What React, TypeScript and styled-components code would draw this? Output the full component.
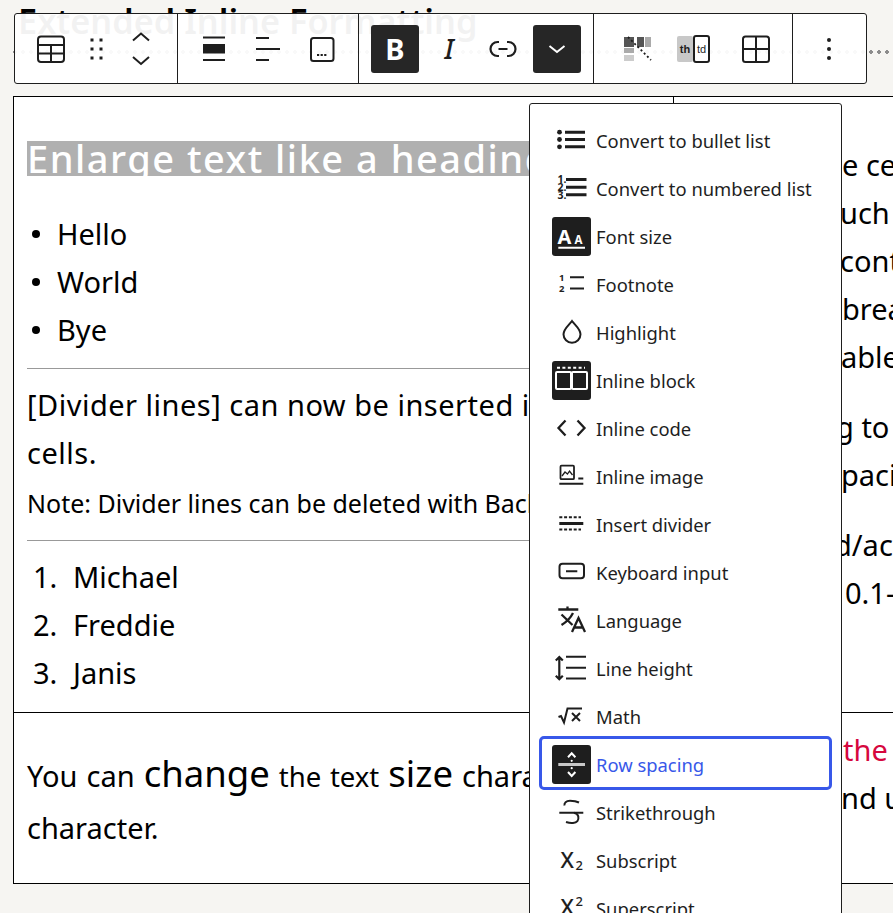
import React from "react";
import styled, { createGlobalStyle } from "styled-components";

const INK = "#1e1e1e";
const BODY_FONT = '"Noto Sans", "Noto Sans CJK JP", sans-serif';
const UI_FONT = '"Noto Sans", "Open Sans", sans-serif';

const GlobalStyle = createGlobalStyle`
  html, body {
    margin: 0;
    padding: 0;
    background: #f6f5f2;
  }
`;

const Page = styled.div`
  position: relative;
  width: 893px;
  height: 913px;
  overflow: hidden;
  padding-left: 13px;
  box-sizing: border-box;
  font-family: ${BODY_FONT};
  color: #000;
`;

const Title = styled.h2`
  margin: 0 0 0 5px;
  height: 50px;
  font-size: 34.3px;
  line-height: 42px;
  font-weight: 600;
  white-space: nowrap;
  color: #000;
`;

const DotRule = styled.div`
  width: 880px;
  height: 4px;
  background-image: radial-gradient(circle at 2px 2px, #8c8c8c 1.7px, transparent 2px);
  background-size: 8px 4px;
`;

const Table = styled.div`
  display: grid;
  grid-template-columns: 660px 300px;
  grid-template-rows: 616px 170px;
  width: 961px;
  margin-top: 42px;
  border: 1px solid #000;
  background: #fff;
`;

const Cell = styled.div<{ $bottom?: boolean }>`
  box-sizing: border-box;
  overflow: hidden;
  border-right: 1px solid #000;
  border-bottom: ${({ $bottom }) => ($bottom ? "none" : "1px solid #000")};
  padding: 44px 13px 0;
  font-size: 29px;
  line-height: 48px;
  white-space: nowrap;
`;

const LowerCell = styled(Cell)`
  padding-top: 37px;
  line-height: 52px;
  word-spacing: 1.5px;
`;

const SideCell = styled(Cell)`
  padding-left: 169px;
`;

const LowerSideCell = styled(SideCell)`
  padding-top: 13px;
`;

const Highlight = styled.span`
  display: inline-block;
  width: 620px;
  height: 35px;
  line-height: 35px;
  font-size: 38px;
  letter-spacing: 1.5px;
  font-weight: 500;
  background: #b0b0b0;
  color: #fff;
  vertical-align: top;
`;

const Lead = styled.div`
  height: 35px;
  margin-bottom: 34px;
`;

const List = styled.ul`
  list-style: none;
  margin: 0;
  padding: 0;
`;

const Bullet = styled.li`
  display: flex;
  align-items: center;
  padding-left: 30px;
  position: relative;
  &::before {
    content: "";
    position: absolute;
    left: 5px;
    top: 20px;
    width: 8px;
    height: 8px;
    border-radius: 50%;
    background: #000;
  }
`;

const Numbered = styled.li`
  display: flex;
`;

const Num = styled.span`
  width: 46px;
  padding-left: 6px;
  box-sizing: border-box;
`;

const Rule = styled.hr<{ $gap: number }>`
  border: none;
  border-top: 1px solid #999;
  margin: ${({ $gap }) => $gap}px 0 12px;
`;

const DividerText = styled.div`
  letter-spacing: 0.5px;
`;

const Small = styled.div`
  margin-top: 2px;
  font-size: 25px;
`;

const Big = styled.span`
  font-size: 36.5px;
  line-height: 1;
`;

const Tiny = styled.span`
  font-size: 27.5px;
  line-height: 1;
`;

const Line = styled.div<{ $shift?: number; $red?: boolean }>`
  margin-left: ${({ $shift }) => $shift ?? 0}px;
  color: ${({ $red }) => ($red ? "#d6073e" : "#000")};
`;

const Para = styled.div`
  margin-bottom: 22px;
`;

/* toolbar */
const Toolbar = styled.div`
  position: absolute;
  left: 14px;
  top: 13px;
  display: flex;
  height: 71px;
  box-sizing: border-box;
  border: 1px solid ${INK};
  border-radius: 3px;
  background: rgba(255, 255, 255, 0.95);
`;

const Group = styled.div<{ $width: number; $last?: boolean }>`
  display: flex;
  align-items: center;
  width: ${({ $width }) => $width}px;
  box-sizing: border-box;
  padding-left: 12px;
  gap: 6px;
  border-right: ${({ $last }) => ($last ? "none" : `1px solid ${INK}`)};
`;

const ToolButton = styled.button<{ $active?: boolean; $width?: number }>`
  display: flex;
  align-items: center;
  justify-content: center;
  flex: none;
  width: ${({ $width }) => $width ?? 48}px;
  height: 48px;
  padding: 0;
  border: none;
  border-radius: 3px;
  background: ${({ $active }) => ($active ? "#262626" : "transparent")};
  color: ${({ $active }) => ($active ? "#fff" : INK)};
  font-family: ${UI_FONT};
`;

const BoldMark = styled.span`
  font-size: 29px;
  font-weight: 700;
  line-height: 1;
`;

const ItalicMark = styled.span`
  font-size: 27px;
  font-weight: 500;
  font-style: italic;
  line-height: 1;
`;

/* dropdown */
const Menu = styled.div`
  position: absolute;
  left: 529px;
  top: 103px;
  width: 313px;
  height: 860px;
  box-sizing: border-box;
  padding-top: 12px;
  border: 1px solid ${INK};
  border-radius: 3px;
  background: #fff;
  font-family: ${UI_FONT};
`;

const Item = styled.div<{ $focused?: boolean }>`
  position: relative;
  display: flex;
  align-items: center;
  gap: 5px;
  height: 48px;
  padding-left: 22px;
  font-size: 18.4px;
  white-space: nowrap;
  color: ${({ $focused }) => ($focused ? "#3858e9" : INK)};
  &::after {
    content: "";
    display: ${({ $focused }) => ($focused ? "block" : "none")};
    position: absolute;
    left: 9px;
    right: 9px;
    top: -4px;
    bottom: -2px;
    border: 3px solid #3858e9;
    border-radius: 5px;
  }
`;

const Glyph = styled.svg<{ $dark?: boolean }>`
  flex: none;
  width: 39px;
  height: 39px;
  border-radius: 3px;
  background: ${({ $dark }) => ($dark ? "#1e1e1e" : "transparent")};
  color: ${({ $dark }) => ($dark ? "#fff" : INK)};
`;

const ToolGlyph = styled.svg<{ $light?: boolean }>`
  width: 32px;
  height: 32px;
  overflow: visible;
  color: ${({ $light }) => ($light ? "#fff" : INK)};
`;

const S = { fill: "none", stroke: "currentColor", strokeWidth: 2 } as const;
const TXT = { fontFamily: "Noto Sans, sans-serif", fill: "currentColor" } as const;
const CELL_TXT = { fontFamily: "Liberation Sans, sans-serif", fill: "currentColor" } as const;

const menuItems: { label: string; dark?: boolean; focused?: boolean; icon: React.ReactNode }[] = [
  {
    label: "Convert to bullet list",
    icon: (
      <>
        <circle cx="7.5" cy="11.2" r="2.4" fill="currentColor" />
        <circle cx="7.5" cy="18.5" r="2.4" fill="currentColor" />
        <circle cx="7.5" cy="25.8" r="2.4" fill="currentColor" />
        <path d="M13 11.2h20M13 18.5h20M13 25.8h20" {...S} strokeWidth={3} />
      </>
    ),
  },
  {
    label: "Convert to numbered list",
    icon: (
      <>
        <text x="5.5" y="14" fontSize="10.5" fontWeight="700" {...TXT}>1.</text>
        <text x="5.5" y="22" fontSize="10.5" fontWeight="700" {...TXT}>2.</text>
        <text x="5.5" y="30" fontSize="10.5" fontWeight="700" {...TXT}>3.</text>
        <path d="M14 10.5h20.5M14 18.2h20.5M14 25.8h20.5" {...S} strokeWidth={3} />
      </>
    ),
  },
  {
    label: "Font size",
    dark: true,
    icon: (
      <>
        <text x="5.5" y="27" fontSize="20" fontWeight="700" {...TXT}>A</text>
        <text x="22.6" y="27" fontSize="11.5" fontWeight="700" {...TXT}>A</text>
        <path d="M6.3 30.8h26.7" {...S} />
      </>
    ),
  },
  {
    label: "Footnote",
    icon: (
      <>
        <text x="7" y="15.5" fontSize="9.5" fontWeight="700" {...TXT}>1</text>
        <text x="7" y="27" fontSize="9.5" fontWeight="700" {...TXT}>2</text>
        <path d="M18 12.2h14M18 23.5h14" {...S} />
      </>
    ),
  },
  {
    label: "Highlight",
    icon: <path d="M20 8C17 12 11.5 16 11.5 21.2a8.5 8.5 0 0 0 17 0C28.5 16 23 12 20 8z" {...S} />,
  },
  {
    label: "Inline block",
    dark: true,
    icon: (
      <>
        <path d="M5 6.7h28" {...S} strokeDasharray="3 2.4" />
        <rect x="4" y="11" width="15" height="17" rx="1" {...S} />
        <rect x="20" y="11" width="15" height="17" rx="1" {...S} />
      </>
    ),
  },
  {
    label: "Inline code",
    icon: <path d="M13.5 11.5L6.5 19l7 7.5M25.5 11.5l7 7.5-7 7.5" {...S} strokeWidth={2.3} />,
  },
  {
    label: "Inline image",
    icon: (
      <>
        <rect x="8.5" y="8.7" width="13.5" height="13.5" rx="1" {...S} strokeWidth={1.8} />
        <path d="M10 19l3-4 2.5 2 2-3 3 4" {...S} strokeWidth={1.3} />
        <path d="M26.3 21.5h5M7.3 26.8h24" {...S} />
      </>
    ),
  },
  {
    label: "Insert divider",
    icon: (
      <>
        <path d="M7.3 12.2H29M7.3 24.5H29" {...S} strokeDasharray="3 1.8" />
        <path d="M7.3 18.5h24" {...S} strokeWidth={3} />
      </>
    ),
  },
  {
    label: "Keyboard input",
    icon: (
      <>
        <rect x="7.5" y="10.7" width="24.5" height="14.5" rx="3" {...S} />
        <path d="M14 18.2h11.3" {...S} />
      </>
    ),
  },
  {
    label: "Language",
    icon: (
      <path
        d="M6.3 8.5h20M15.5 5.5v3M9.5 13.5l11 10.5M21 12c-2.5 5-6.5 9-11.5 12M20 31l6.5-14 6.5 14M22.2 26.5h8.6"
        {...S}
        strokeWidth={2.3}
      />
    ),
  },
  {
    label: "Line height",
    icon: (
      <>
        <path d="M7.3 9v20M3.8 11.5l3.5-3.5 3.5 3.5M3.8 26.8l3.5 3.5 3.5-3.5" {...S} strokeWidth={2.2} />
        <path d="M14 7.8h20M14 18.8h20M14 29.5h20" {...S} />
      </>
    ),
  },
  {
    label: "Math",
    icon: <path d="M6.5 20l2.5-1 3 6.5 3.5-14H30M20 16l8 8M28 16l-8 8" {...S} />,
  },
  {
    label: "Row spacing",
    dark: true,
    focused: true,
    icon: (
      <>
        <path d="M16 12.3l3.7-4 3.7 4M16 27l3.7 4 3.7-4" {...S} />
        <circle cx="19.7" cy="15.8" r="1.1" fill="currentColor" />
        <circle cx="19.7" cy="23.2" r="1.1" fill="currentColor" />
        <path d="M6.3 19.5h26.7" fill="none" stroke="#c8c8c8" strokeWidth={3} />
      </>
    ),
  },
  {
    label: "Strikethrough",
    icon: (
      <>
        <path d="M7.3 19.8h24" {...S} />
        <path d="M27 9.5C24 8 21 7.8 18 7.8c-4 0-6 2-5.5 4.7M14 29c3 1 5 1.2 7 1 4-.3 6-2.5 5.3-6.5-.4-2-2.2-3.2-4.3-3.7" {...S} />
      </>
    ),
  },
  {
    label: "Subscript",
    icon: (
      <>
        <text x="8.5" y="26.5" fontSize="22" fontWeight="500" {...TXT}>X</text>
        <text x="23.5" y="29" fontSize="13" fontWeight="500" {...TXT}>2</text>
      </>
    ),
  },
  {
    label: "Superscript",
    icon: (
      <>
        <text x="8.5" y="25.8" fontSize="22" fontWeight="500" {...TXT}>X</text>
        <text x="23.5" y="16.5" fontSize="13" fontWeight="500" {...TXT}>2</text>
      </>
    ),
  },
];

const sideLines = [
  [
    { text: "e ce", shift: -1 },
    { text: "uch", shift: -3 },
    { text: "cont", shift: -3 },
    { text: "brea", shift: -1 },
    { text: "able", shift: -2 },
  ],
  [{ text: "g to", shift: -7 }, { text: "paci", shift: -2 }],
  [{ text: "d/ac", shift: -9 }, { text: "0.1-", shift: 2 }],
];

const App: React.FC = () => {
  return (
    <Page>
      <GlobalStyle />
      <Title>Extended Inline Formatting</Title>
      <DotRule />

      <Table>
        <Cell>
          <Lead>
            <Highlight>Enlarge text like a heading</Highlight>
          </Lead>
          <List>
            <Bullet>Hello</Bullet>
            <Bullet>World</Bullet>
            <Bullet>Bye</Bullet>
          </List>
          <Rule $gap={14} />
          <DividerText>
            [Divider lines] can now be inserted into
            <br />
            cells.
          </DividerText>
          <Small>Note: Divider lines can be deleted with Backspace.</Small>
          <Rule $gap={13} />
          <List as="ol">
            <Numbered><Num>1.</Num>Michael</Numbered>
            <Numbered><Num>2.</Num>Freddie</Numbered>
            <Numbered><Num>3.</Num>Janis</Numbered>
          </List>
        </Cell>
        <SideCell>
          {sideLines.map((para, i) => (
            <Para key={i}>
              {para.map((line) => (
                <Line key={line.text} $shift={line.shift}>{line.text}</Line>
              ))}
            </Para>
          ))}
        </SideCell>
        <LowerCell $bottom>
          You can <Big>change</Big> <Tiny>the text</Tiny> <Big>size</Big> character by
          <br />
          character.
        </LowerCell>
        <LowerSideCell $bottom>
          <Line $red>the</Line>
          <Line $shift={-2}>nd u</Line>
        </LowerSideCell>
      </Table>

      <Toolbar>
        <Group $width={163}>
          <ToolButton>
            <ToolGlyph viewBox="0 0 32 32">
              <rect x="3" y="3.5" width="26" height="25.5" rx="3" {...S} />
              <path d="M3 12h26M3 20.5h26M16 12v17" {...S} />
            </ToolGlyph>
          </ToolButton>
          <ToolButton $width={30}>
            <ToolGlyph viewBox="0 0 32 32">
              <path
                d="M10.5 5.5h3v3h-3zM19.5 5.5h3v3h-3zM10.5 14.5h3v3h-3zM19.5 14.5h3v3h-3zM10.5 23.5h3v3h-3zM19.5 23.5h3v3h-3z"
                fill="currentColor"
              />
            </ToolGlyph>
          </ToolButton>
          <ToolButton>
            <ToolGlyph viewBox="0 0 32 32">
              <path d="M8 7.5l8-7 8 7M8 24l8 7 8-7" {...S} />
            </ToolGlyph>
          </ToolButton>
        </Group>
        <Group $width={181}>
          <ToolButton>
            <ToolGlyph viewBox="0 0 32 32">
              <path d="M5 4.5h22M5 27h22" {...S} />
              <rect x="5" y="11" width="22" height="9.5" fill="currentColor" />
            </ToolGlyph>
          </ToolButton>
          <ToolButton>
            <ToolGlyph viewBox="0 0 32 32">
              <path d="M4 5h13M4 16h24M4 27h13" {...S} />
            </ToolGlyph>
          </ToolButton>
          <ToolButton>
            <ToolGlyph viewBox="0 0 32 32">
              <rect x="5" y="5" width="22.5" height="23" rx="2.5" {...S} />
              <path d="M11 22h10" {...S} strokeDasharray="2.2 1.4" />
            </ToolGlyph>
          </ToolButton>
        </Group>
        <Group $width={235}>
          <ToolButton $active>
            <BoldMark>B</BoldMark>
          </ToolButton>
          <ToolButton>
            <ItalicMark>I</ItalicMark>
          </ToolButton>
          <ToolButton>
            <ToolGlyph viewBox="0 0 32 32">
              <path
                d="M12 9h-1.500a7 7 0 0 0 0 14H12M20 9h1.500a7 7 0 0 1 0 14H20M11.500 16h9"
                {...S}
                strokeWidth={2.2}
              />
            </ToolGlyph>
          </ToolButton>
          <ToolButton $active>
            <ToolGlyph viewBox="0 0 32 32" $light>
              <path d="M8.5 13l7.5 6 7.500-6" {...S} />
            </ToolGlyph>
          </ToolButton>
        </Group>
        <Group $width={199}>
          <ToolButton $width={62}>
            <ToolGlyph viewBox="0 0 32 32">
              <rect x="3" y="4" width="10" height="10" fill="#555" />
              <rect x="16" y="4" width="7" height="10" fill="#555" />
              <rect x="24" y="4" width="6" height="10" fill="#aaa" />
              <rect x="3" y="15" width="10" height="5" fill="#aaa" />
              <rect x="3" y="22" width="10" height="6" fill="#ccc" />
              <path d="M7 4l23 23" stroke="#1e1e1e" strokeWidth={1.8} strokeDasharray="2 2.5" />
            </ToolGlyph>
          </ToolButton>
          <ToolButton $width={38}>
            <svg width="36" height="28" viewBox="0 0 36 28">
              <rect x="2" y="1" width="16" height="26" rx="2" fill="#c8c8c8" />
              <text x="10" y="18" fontSize="11" fontWeight="700" textAnchor="middle" {...CELL_TXT}>th</text>
              <rect x="19" y="1" width="15" height="26" rx="2" fill="#fff" stroke="currentColor" strokeWidth={2} />
              <text x="26.5" y="18" fontSize="11" textAnchor="middle" {...CELL_TXT}>td</text>
            </svg>
          </ToolButton>
          <ToolButton $width={75}>
            <ToolGlyph viewBox="0 0 32 32">
              <rect x="3" y="3.5" width="26" height="25.5" rx="2.5" {...S} />
              <path d="M3 16h26M16 3.5V29" {...S} />
            </ToolGlyph>
          </ToolButton>
        </Group>
        <Group $width={73} $last>
          <ToolButton>
            <ToolGlyph viewBox="0 0 32 32">
              <circle cx="16" cy="7" r="2" fill="currentColor" />
              <circle cx="16" cy="16" r="2" fill="currentColor" />
              <circle cx="16" cy="25" r="2" fill="currentColor" />
            </ToolGlyph>
          </ToolButton>
        </Group>
      </Toolbar>

      <Menu>
        {menuItems.map((item) => (
          <Item key={item.label} $focused={item.focused}>
            <Glyph viewBox="0 0 39 39" $dark={item.dark}>
              {item.icon}
            </Glyph>
            {item.label}
          </Item>
        ))}
      </Menu>
    </Page>
  );
};

export default App;
